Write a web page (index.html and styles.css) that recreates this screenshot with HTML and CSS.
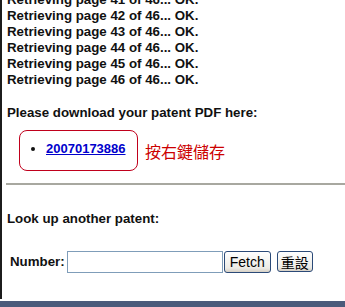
FILE: index.html
```html
<!DOCTYPE html>
<html>
<head>
    <meta charset="UTF-8" />
    <title>Patent Fetcher</title>
    <link rel="stylesheet" href="styles.css">
</head>
<body>
    <div class="page">
      <div class="log">
        <div>Retrieving page 41 of 46... OK.</div>
        <div>Retrieving page 42 of 46... OK.</div>
        <div>Retrieving page 43 of 46... OK.</div>
        <div>Retrieving page 44 of 46... OK.</div>
        <div>Retrieving page 45 of 46... OK.</div>
        <div>Retrieving page 46 of 46... OK.</div>
      </div>

      <div class="heading">Please download your patent PDF here:</div>

      <div class="download">
        <ul class="box">
          <li><a href="#">20070173886</a></li>
        </ul>
        <span class="hint">按右鍵儲存</span>
      </div>

      <hr class="rule">

      <div class="heading lookup">Look up another patent:</div>

      <form class="fetch" onsubmit="return false;">
        <label for="num">Number:</label>
        <input type="text" id="num" class="num">
        <button type="submit" class="btn">Fetch</button>
        <button type="reset" class="btn reset">重設</button>
      </form>
    </div>
    <div class="taskbar"></div>
</body>
</html>
```

FILE: styles.css
```css
/* page */
html, body {
margin: 0;
height: 307px;
overflow: hidden;
background-color: #fff;
}

body {
font-family: "Liberation Sans", Arial, "Noto Sans CJK TC", sans-serif;
font-size: 13.3px;
font-weight: bold;
color: #111;
}

.page {
height: 299px;
overflow: hidden;
border-left: 2px solid #1c1c1c;
padding-left: 5px;
}

.log {
margin-top: -8px;
line-height: 16px;
}

.heading {
line-height: 16px;
margin-top: 17px;
}

/* download link */
.download {
display: flex;
align-items: center;
margin-top: 9px;
margin-left: 12px;
}

.box {
margin: 0;
width: 91px;
padding: 10px 0 13px 26px;
line-height: 16px;
border: 1px solid #c0001c;
border-radius: 8px;
font-size: 13px;
}

.box a {
color: #0000cc;
}

.hint {
margin-left: 7px;
font-family: "Noto Sans CJK TC", sans-serif;
font-weight: normal;
font-size: 16px;
color: #cc0000;
}

.rule {
margin: 12px 0 0 -1px;
height: 0;
border: none;
border-top: 2px solid #a8a8a0;
}

.lookup {
margin-top: 26px;
}

/* form */
.fetch {
display: flex;
align-items: center;
margin: 23px 0 0 3px;
height: 23px;
}

.fetch label {
margin-right: 2px;
}

.num {
box-sizing: border-box;
width: 156px;
height: 22px;
margin: 1px 1px 0 0;
border: 1px solid #7f9db9;
padding: 0 3px;
font-size: 13px;
}

.btn {
box-sizing: border-box;
height: 22px;
padding: 0 5px;
border: 1px solid #2b4a78;
border-radius: 3px;
background: linear-gradient(#ffffff, #ecebe6 80%, #d6d0c5);
font-family: "Liberation Sans", Arial, sans-serif;
font-weight: normal;
font-size: 14px;
color: #000;
}

.reset {
margin-left: 6px;
height: 21px;
padding: 0 3px;
font-family: "Noto Sans CJK TC", sans-serif;
font-size: 14px;
line-height: 18px;
}

.taskbar {
margin-top: 2px;
height: 6px;
background-color: #4b5b7b;
}
```
